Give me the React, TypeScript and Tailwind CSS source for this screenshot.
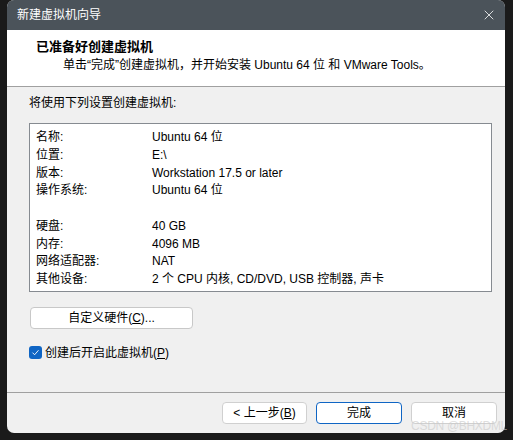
import { X } from "lucide-react";

const font = { fontFamily: '"Liberation Sans", "Noto Sans CJK SC", sans-serif' };

const rows: [string, string][] = [
  ["名称:", "Ubuntu 64 位"],
  ["位置:", "E:\\"],
  ["版本:", "Workstation 17.5 or later"],
  ["操作系统:", "Ubuntu 64 位"],
  ["", ""],
  ["硬盘:", "40 GB"],
  ["内存:", "4096 MB"],
  ["网络适配器:", "NAT"],
  ["其他设备:", "2 个 CPU 内核, CD/DVD, USB 控制器, 声卡"],
];

export default function App() {
  return (
    <div
      className="relative w-[513px] h-[440px] bg-[#1a1a1a] pl-[7px] pr-[8px] pb-[7px] text-[12px] text-black"
      style={font}
    >
      <div className="flex flex-col h-full bg-[#f0f0f0] rounded-t-[7px] rounded-b-[7px] overflow-hidden">
        {/* Title bar */}
        <div className="flex items-center justify-between h-[30px] shrink-0 bg-[#4b535a] pl-[10px] pr-[8px] text-white">
          <span className="leading-none">新建虚拟机向导</span>
          <X className="w-[16px] h-[16px]" strokeWidth={1.2} />
        </div>

        {/* Header */}
        <div className="h-[57px] shrink-0 bg-white pl-[29px] pt-[9px] border-b border-[#a0a0a0]">
          <div className="font-bold text-[13px] leading-[16px]">已准备好创建虚拟机</div>
          <div className="pl-[27px] mt-[2px] leading-[16px]">
            单击“完成”创建虚拟机，并开始安装 Ubuntu 64 位 和 VMware Tools。
          </div>
        </div>

        {/* Body */}
        <div className="flex flex-col flex-1 pl-[22px] pr-[13px]">
          <div className="mt-[8px] leading-[16px]">将使用下列设置创建虚拟机:</div>
          <div className="mt-[12px] h-[169px] bg-white border border-[#868b91] pt-[4px] pl-[6px]">
            {rows.map(([k, v], i) => (
              <div key={i} className="flex h-[17.8px] items-center">
                <span className="w-[116px]">{k}</span>
                <span>{v}</span>
              </div>
            ))}
          </div>
          <button className="mt-[15px] ml-[1px] w-[163px] h-[22px] bg-white border border-[#c8c8c8] rounded-[4px] text-[12px] leading-none">
            自定义硬件(<span className="underline">C</span>)...
          </button>
          <label className="flex items-center gap-[3px] mt-[17px]">
            <span className="flex items-center justify-center w-[13px] h-[13px] rounded-[3px] bg-[#0f65c4]">
              <svg viewBox="0 0 12 12" className="w-[9px] h-[9px]">
                <path d="M2 6.2 L4.8 9 L10 3" fill="none" stroke="white" strokeWidth="1.2" />
              </svg>
            </span>
            <span className="leading-none">
              创建后开启此虚拟机(<span className="underline">P</span>)
            </span>
          </label>
        </div>

        {/* Footer */}
        <div className="h-[41px] shrink-0 border-t border-[#a0a0a0] flex items-start justify-end gap-[9px] pr-[8px] pt-[9px]">
          <button className="w-[85px] h-[22px] bg-white border border-[#d0d0d0] rounded-[4px] leading-none">
            &lt; 上一步(<span className="underline">B</span>)
          </button>
          <button className="w-[86px] h-[22px] bg-white border-[1.5px] border-[#0f65c4] rounded-[4px] leading-none">
            完成
          </button>
          <button className="w-[86px] h-[22px] bg-white border border-[#d0d0d0] rounded-[4px] leading-none">
            取消
          </button>
        </div>
      </div>
      <span className="absolute right-[6px] bottom-[5px] text-[12px] text-[#c8c8c8]/60 tracking-tight">
        CSDN @BHXDML
      </span>
    </div>
  );
}
